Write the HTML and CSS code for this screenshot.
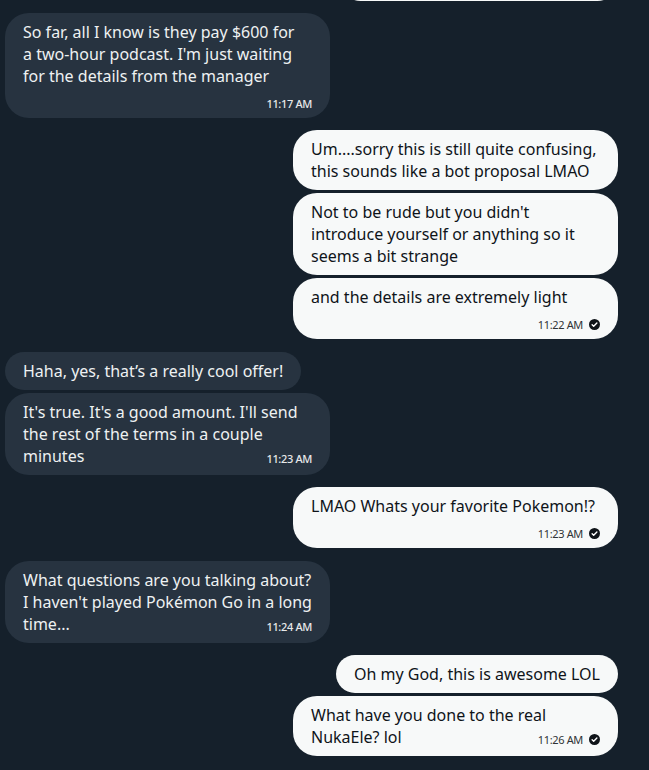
FILE: index.html
```html
<!DOCTYPE html>
<html lang="en">
<head>
<meta charset="utf-8">
<title>Messages</title>
<link rel="stylesheet" href="styles.css">
</head>
<body>
<div class="chat">
  <div class="group">
    <div class="bubble out cut"></div>
  </div>

  <div class="group">
    <div class="bubble in wide">
      <div class="text">So far, all I know is they pay $600 for<br>a two-hour podcast. I'm just waiting<br>for the details from the manager</div>
      <div class="meta">11:17 AM</div>
    </div>
  </div>

  <div class="group">
    <div class="bubble out wide">
      <div class="text">Um....sorry this is still quite confusing,<br>this sounds like a bot proposal LMAO</div>
    </div>
    <div class="bubble out wide">
      <div class="text">Not to be rude but you didn't<br>introduce yourself or anything so it<br>seems a bit strange</div>
    </div>
    <div class="bubble out wide">
      <div class="text">and the details are extremely light</div>
      <div class="meta">11:22 AM <svg class="check" viewBox="0 0 24 24"><circle cx="12" cy="12" r="12"/><path d="M6.8 12.4l3.4 3.4 7-7"/></svg></div>
    </div>
  </div>

  <div class="group">
    <div class="bubble in">
      <div class="text">Haha, yes, that’s a really cool offer!</div>
    </div>
    <div class="bubble in wide">
      <div class="text">It's true. It's a good amount. I'll send<br>the rest of the terms in a couple<br>minutes<span class="meta inline">11:23 AM</span></div>
    </div>
  </div>

  <div class="group">
    <div class="bubble out wide">
      <div class="text">LMAO Whats your favorite Pokemon!?</div>
      <div class="meta">11:23 AM <svg class="check" viewBox="0 0 24 24"><circle cx="12" cy="12" r="12"/><path d="M6.8 12.4l3.4 3.4 7-7"/></svg></div>
    </div>
  </div>

  <div class="group">
    <div class="bubble in wide">
      <div class="text">What questions are you talking about?<br>I haven't played Pokémon Go in a long<br>time...<span class="meta inline">11:24 AM</span></div>
    </div>
  </div>

  <div class="group">
    <div class="bubble out">
      <div class="text">Oh my God, this is awesome LOL</div>
    </div>
    <div class="bubble out wide">
      <div class="text">What have you done to the real<br>NukaEle? lol<span class="meta inline">11:26 AM <svg class="check" viewBox="0 0 24 24"><circle cx="12" cy="12" r="12"/><path d="M6.8 12.4l3.4 3.4 7-7"/></svg></span></div>
    </div>
  </div>
</div>
</body>
</html>
```

FILE: styles.css
```css
html, body {
  margin: 0;
  padding: 0;
}

body {
  background: #15202b;
  width: 649px;
  height: 770px;
  overflow: hidden;
  font-family: "Segoe UI", "Noto Sans", "Open Sans", Arial, sans-serif;
}

.chat {
  display: flex;
  flex-direction: column;
  gap: 12.5px;
  padding: 0 31px 0 5px;
}

.group {
  display: flex;
  flex-direction: column;
  gap: 3px;
}

.bubble {
  box-sizing: border-box;
  max-width: 325px;
  padding: 8px 18px;
  border-radius: 24px;
  font-size: 16px;
  line-height: 22px;
  display: flow-root;
}

.bubble.wide {
  width: 325px;
}

.in {
  align-self: flex-start;
  background: #273340;
  color: #eef1f2;
}

.out {
  align-self: flex-end;
  background: #f7f9f9;
  color: #0f1419;
}

.cut {
  width: 278px;
  height: 41px;
  margin-top: -40px;
  margin-bottom: -1px;
}

.text {
  white-space: nowrap;
}

.meta {
  display: flex;
  justify-content: flex-end;
  align-items: center;
  gap: 6px;
  font-size: 11px;
  letter-spacing: -0.35px;
  line-height: 13px;
  padding-top: 10px;
  white-space: nowrap;
}

.in .meta {
  color: #e7e9ea;
  font-weight: 500;
}

.out .meta {
  color: #2f3336;
}

.meta.inline {
  float: right;
  line-height: 17px;
  padding-top: 5px;
}

.check {
  width: 11px;
  height: 11px;
  flex: none;
}

.check circle {
  fill: #0f1419;
}

.check path {
  fill: none;
  stroke: #ffffff;
  stroke-width: 3;
  stroke-linecap: round;
  stroke-linejoin: round;
}
```
